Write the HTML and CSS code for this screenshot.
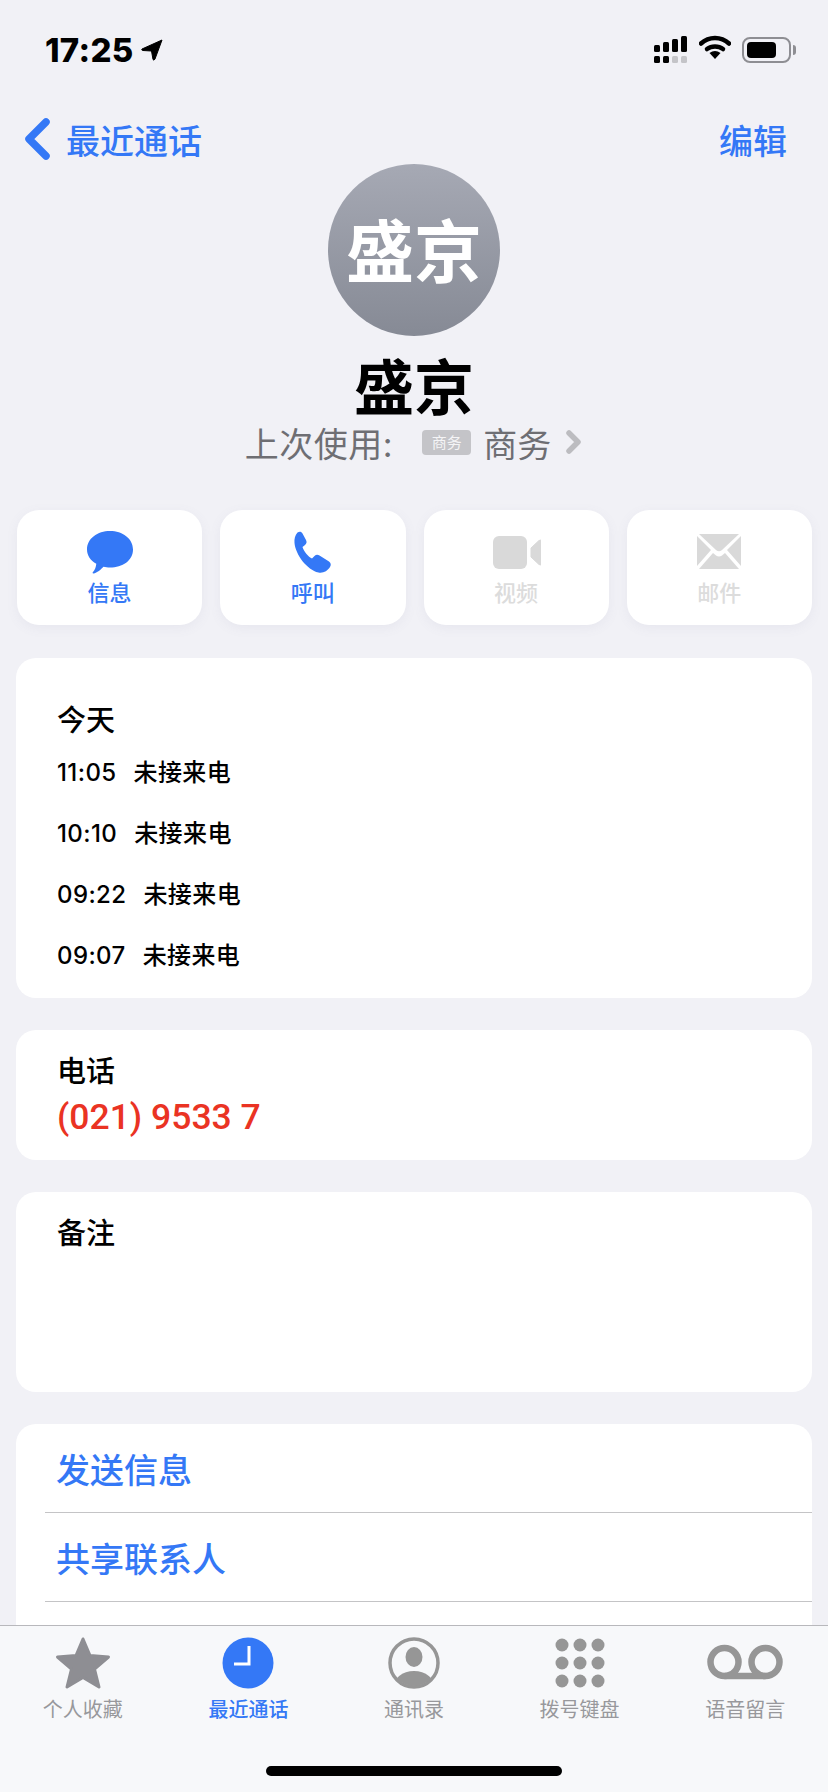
FILE: index.html
```html
<!DOCTYPE html>
<html lang="zh">
<head>
  <meta charset="UTF-8">
  <title>盛京</title>
  <link rel="stylesheet" href="styles.css">
</head>
<body>
<div class="phone">
  <div class="main">
    <div class="status-bar">
      <div class="clock-wrap">
        <span class="time">17:25</span>
        <svg class="loc-arrow" width="22" height="22" viewBox="0 0 22 22"><path d="M21 1 L1 10 Q0 11 2 11.500 L10.500 12 L12 20.500 Q13 22 14 20 Z" fill="#000" stroke="#000" stroke-width="1" stroke-linejoin="round"/></svg>
      </div>
      <div class="status-icons">
        <svg width="34" height="27" viewBox="0 0 34 27">
          <rect x="0" y="9" width="6" height="7" rx="1.500" fill="#000"/>
          <rect x="9" y="6" width="6" height="10" rx="1.500" fill="#000"/>
          <rect x="18" y="3" width="6" height="13" rx="1.500" fill="#000"/>
          <rect x="27" y="0" width="6" height="16" rx="1.500" fill="#000"/>
          <rect x="0" y="20" width="6" height="7" rx="1.500" fill="#000"/>
          <rect x="9" y="20" width="6" height="7" rx="1.500" fill="#000"/>
          <rect x="18" y="20" width="6" height="7" rx="1.500" fill="#c4c4c8"/>
          <rect x="27" y="20" width="6" height="7" rx="1.500" fill="#c4c4c8"/>
        </svg>
        <svg class="wifi" width="32" height="24" viewBox="0 0 32 24">
          <path d="M2 8.500 C10 1 22 1 30 8.500" fill="none" stroke="#000" stroke-width="4.500" stroke-linecap="round"/>
          <path d="M8 14 C12.500 10.500 19.500 10.500 24 14" fill="none" stroke="#000" stroke-width="4.500" stroke-linecap="round"/>
          <path d="M10.500 18 Q16 14 21.500 18 L16 24 Z" fill="#000"/>
        </svg>
        <div class="battery"><div class="battery-fill"></div></div>
        <div class="battery-nub"></div>
      </div>
    </div>

    <div class="nav">
      <div class="nav-back">
        <svg width="28" height="42" viewBox="0 0 28 42"><path d="M22 4 L5 21 L22 38" fill="none" stroke="#3478f6" stroke-width="7.500" stroke-linecap="round" stroke-linejoin="round"/></svg>
        <span>最近通话</span>
      </div>
      <span class="nav-edit">编辑</span>
    </div>

    <div class="contact">
      <div class="avatar">盛京</div>
      <div class="name">盛京</div>
      <div class="last-used">
        <span class="last-label">上次使用:</span>
        <span class="badge">商务</span>
        <span>商务</span>
        <svg width="18" height="26" viewBox="0 0 18 26"><path d="M4 4 L13 13 L4 22" fill="none" stroke="#bcbcc0" stroke-width="5.500" stroke-linecap="round" stroke-linejoin="round"/></svg>
      </div>
    </div>

    <div class="actions">
      <div class="action">
        <svg class="action-icon" width="48" height="44" viewBox="0 0 48 44"><path d="M24 1 C36.500 1 47 8.500 47 19.500 C47 30.500 36.500 37.500 24 37.500 C21.500 37.500 19.500 37.300 17.500 36.800 C15 39.500 11 43 7.500 43.500 C6.500 43.600 6.300 42.700 7 42 C9 40 10 37 10.300 33.800 C4.500 30.500 1 25.500 1 19.500 C1 8.500 11.500 1 24 1 Z" fill="#3478f6"/></svg>
        <span class="action-label">信息</span>
      </div>
      <div class="action">
        <svg class="action-icon" width="48" height="44" viewBox="0 0 48 44"><path d="M8.500 2.500 C10.500 1 12.500 1.500 13.500 3.500 L17 10 C18 12 17.700 13.500 16 15 L13.500 17 C14.500 21 19.500 27 23 28.500 L25.500 26 C27 24.500 28.700 24.300 30.500 25.500 L40 31.500 C42 33 42.300 35 41 37 C38.500 41 34 43.500 29.500 42.500 C18 40 6.500 24.500 5.500 13 C5.200 9 6 5 8.500 2.500 Z" fill="#3478f6"/></svg>
        <span class="action-label">呼叫</span>
      </div>
      <div class="action action-off">
        <svg class="action-icon" width="50" height="44" viewBox="-2 0 50 44"><rect x="0" y="6" width="34" height="33" rx="6" fill="#d9d9d9"/><path d="M38 18 L46 10.500 Q48.500 9 49 11.500 L49 33.500 Q48.500 36 46 34.500 L38 27 Z" fill="#d9d9d9" stroke="#d9d9d9" stroke-linejoin="round"/></svg>
        <span class="action-label">视频</span>
      </div>
      <div class="action action-off">
        <svg class="action-icon" width="44" height="44" viewBox="0 0 44 44">
          <path d="M2 4 H42 L25 20 Q22 22.500 19 20 Z" fill="#d9d9d9"/>
          <path d="M0 6 L14 20 L0 36 Z" fill="#d9d9d9"/>
          <path d="M44 6 L30 20 L44 36 Z" fill="#d9d9d9"/>
          <path d="M2 39 L16 23 L19 25.500 Q22 27.500 25 25.500 L28 23 L42 39 Z" fill="#d9d9d9"/>
        </svg>
        <span class="action-label">邮件</span>
      </div>
    </div>

    <div class="panels">
      <div class="panel panel-calls">
        <div class="panel-title">今天</div>
        <div class="call"><span>11:05</span><span>未接来电</span></div>
        <div class="call"><span>10:10</span><span>未接来电</span></div>
        <div class="call"><span>09:22</span><span>未接来电</span></div>
        <div class="call"><span>09:07</span><span>未接来电</span></div>
      </div>
      <div class="panel panel-phone">
        <div class="panel-title">电话</div>
        <div class="number">(021) 9533 7</div>
      </div>
      <div class="panel panel-notes">
        <div class="panel-title">备注</div>
      </div>
      <div class="panel panel-links">
        <div class="link-row">发送信息</div>
        <div class="link-row">共享联系人</div>
        <div class="link-row"></div>
      </div>
    </div>
  </div>

  <div class="tabbar">
    <div class="tabs">
      <div class="tab">
        <svg width="58" height="54" viewBox="0 0 58 54"><path d="M29 3 L36 19.500 L54.500 21 L40.500 33 L45 51 L29 41.500 L13 51 L17.500 33 L3.500 21 L22 19.500 Z" fill="#8e8e93" stroke="#8e8e93" stroke-width="3" stroke-linejoin="round"/></svg>
        <span>个人收藏</span>
      </div>
      <div class="tab tab-on">
        <svg width="58" height="54" viewBox="0 0 58 54"><circle cx="29" cy="27" r="25.500" fill="#3478f6"/><path d="M30 10 V28 H15" fill="none" stroke="#fff" stroke-width="3"/></svg>
        <span>最近通话</span>
      </div>
      <div class="tab">
        <svg width="58" height="54" viewBox="0 0 58 54"><defs><clipPath id="ring"><circle cx="29" cy="27" r="23"/></clipPath></defs><circle cx="29" cy="27" r="24" fill="none" stroke="#969696" stroke-width="3.500"/><ellipse cx="29" cy="21" rx="8.500" ry="10" fill="#969696"/><ellipse cx="29" cy="52" rx="21" ry="17" fill="#969696" clip-path="url(#ring)"/></svg>
        <span>通讯录</span>
      </div>
      <div class="tab">
        <svg width="58" height="54" viewBox="0 0 58 54" fill="#969696">
          <circle cx="11" cy="9" r="6.500"/><circle cx="29" cy="9" r="6.500"/><circle cx="47" cy="9" r="6.500"/>
          <circle cx="11" cy="27" r="6.500"/><circle cx="29" cy="27" r="6.500"/><circle cx="47" cy="27" r="6.500"/>
          <circle cx="11" cy="45" r="6.500"/><circle cx="29" cy="45" r="6.500"/><circle cx="47" cy="45" r="6.500"/>
        </svg>
        <span>拨号键盘</span>
      </div>
      <div class="tab">
        <svg width="78" height="54" viewBox="0 0 78 54"><g fill="none" stroke="#969696" stroke-width="6.500"><circle cx="18.500" cy="26" r="14"/><circle cx="59.500" cy="26" r="14"/><path d="M18.500 40 H59.500"/></g></svg>
        <span>语音留言</span>
      </div>
    </div>
    <div class="home-bar"></div>
  </div>
</div>
</body>
</html>
```

FILE: styles.css
```css
* {
  box-sizing: border-box;
}

body {
  margin: 0;
  font-family: Inter, "Noto Sans CJK SC", sans-serif;
  background-color: #f1f1f6;
  color: #000;
}

.phone {
  width: 828px;
  height: 1792px;
  display: flex;
  flex-direction: column;
  overflow: hidden;
}

.main {
  flex: 1;
  min-height: 0;
  overflow: hidden;
}

/* status bar */
.status-bar {
  height: 114px;
  padding: 33px 32px 0 45px;
  display: flex;
  justify-content: space-between;
  align-items: flex-start;
}

.clock-wrap {
  display: flex;
  align-items: center;
  gap: 7px;
}

.time {
  font-size: 33px;
  font-weight: 800;
  line-height: 34px;
  letter-spacing: 0.3px;
}

.status-icons {
  display: flex;
  align-items: center;
  padding-top: 3px;
}

.wifi {
  margin-left: 11px;
  margin-top: -5px;
}

.battery {
  width: 49px;
  height: 26px;
  margin-left: 11px;
  padding: 3px;
  border: 2px solid #8e8e93;
  border-radius: 8px;
}

.battery-fill {
  width: 29px;
  height: 100%;
  background-color: #000;
  border-radius: 4px;
}

.battery-nub {
  width: 3px;
  height: 10px;
  margin-left: 2px;
  background-color: #8e8e93;
  border-radius: 0 3px 3px 0;
}

/* nav */
.nav {
  height: 50px;
  padding: 0 41px 0 24px;
  display: flex;
  justify-content: space-between;
  align-items: center;
  font-size: 34px;
  font-weight: 500;
  color: #3478f6;
}

.nav-back {
  display: flex;
  align-items: center;
  gap: 14px;
}

/* contact header */
.contact {
  display: flex;
  flex-direction: column;
  align-items: center;
}

.avatar {
  width: 172px;
  height: 172px;
  padding-bottom: 6px;
  border-radius: 50%;
  background: linear-gradient(#a6a9b4, #868a95);
  color: #fff;
  font-size: 68px;
  font-weight: 700;
  display: flex;
  align-items: center;
  justify-content: center;
}

.name {
  margin-top: 20px;
  font-size: 60px;
  font-weight: 700;
  line-height: 64px;
}

.last-used {
  height: 48px;
  padding-bottom: 4px;
  display: flex;
  align-items: center;
  font-size: 34px;
  color: #6e6e73;
}

.last-label {
  letter-spacing: 0.5px;
}

.badge {
  width: 49px;
  height: 25px;
  margin: 0 12px 0 29px;
  background-color: #c4c4c8;
  border-radius: 4px;
  color: #f4f4f6;
  font-size: 15px;
  line-height: 25px;
  text-align: center;
}

.last-used svg {
  margin-left: 14px;
}

/* action buttons */
.actions {
  margin-top: 42px;
  padding: 0 16px 0 17px;
  display: grid;
  grid-template-columns: repeat(4, 1fr);
  gap: 18px;
}

.action {
  height: 115px;
  padding-top: 20px;
  background-color: #fff;
  border-radius: 22px;
  box-shadow: 0 3px 12px rgba(120, 120, 150, 0.08);
  display: flex;
  flex-direction: column;
  align-items: center;
  color: #3478f6;
}

.action-label {
  margin-top: 6px;
  font-size: 22px;
  line-height: 26px;
  font-weight: 500;
}

.action-off {
  color: #dcdcdc;
}

/* panels */
.panels {
  margin-top: 33px;
  padding: 0 16px;
  display: flex;
  flex-direction: column;
  gap: 32px;
}

.panel {
  background-color: #fff;
  border-radius: 20px;
}

.panel-title {
  font-size: 29px;
  font-weight: 500;
  line-height: 40px;
}

.panel-calls {
  height: 340px;
  padding: 43px 40px 0 41px;
}

.call {
  height: 61px;
  display: flex;
  align-items: baseline;
  gap: 17px;
  font-size: 24px;
  font-weight: 500;
  line-height: 63px;
  letter-spacing: 0.4px;
}

.panel-phone {
  height: 130px;
  padding: 22px 41px 0;
}

.number {
  margin-top: 2px;
  font-family: Roboto, sans-serif;
  font-size: 35.5px;
  font-weight: 500;
  line-height: 46px;
  color: #ea3323;
}

.panel-notes {
  height: 200px;
  padding: 22px 41px 0;
}

.panel-links {
  padding-left: 41px;
  border-radius: 20px 20px 0 0;
}

.link-row {
  height: 89px;
  margin-left: -12px;
  padding-left: 11px;
  display: flex;
  align-items: center;
  font-size: 34px;
  font-weight: 500;
  color: #3478f6;
  border-bottom: 1px solid #c4c4c6;
}

/* tab bar */
.tabbar {
  height: 167px;
  flex-shrink: 0;
  background-color: #f7f8fa;
  border-top: 1px solid #b8b8bc;
  display: flex;
  flex-direction: column;
  align-items: center;
}

.tabs {
  width: 100%;
  padding-top: 10px;
  display: grid;
  grid-template-columns: repeat(5, 1fr);
}

.tab {
  display: flex;
  flex-direction: column;
  align-items: center;
  font-size: 20px;
  line-height: 28px;
  color: #98989c;
}

.tab svg {
  margin-bottom: 6px;
}

.tab-on {
  color: #3478f6;
  font-weight: 500;
}

.home-bar {
  width: 296px;
  height: 10px;
  margin-top: 42px;
  background-color: #000;
  border-radius: 5px;
}
```
